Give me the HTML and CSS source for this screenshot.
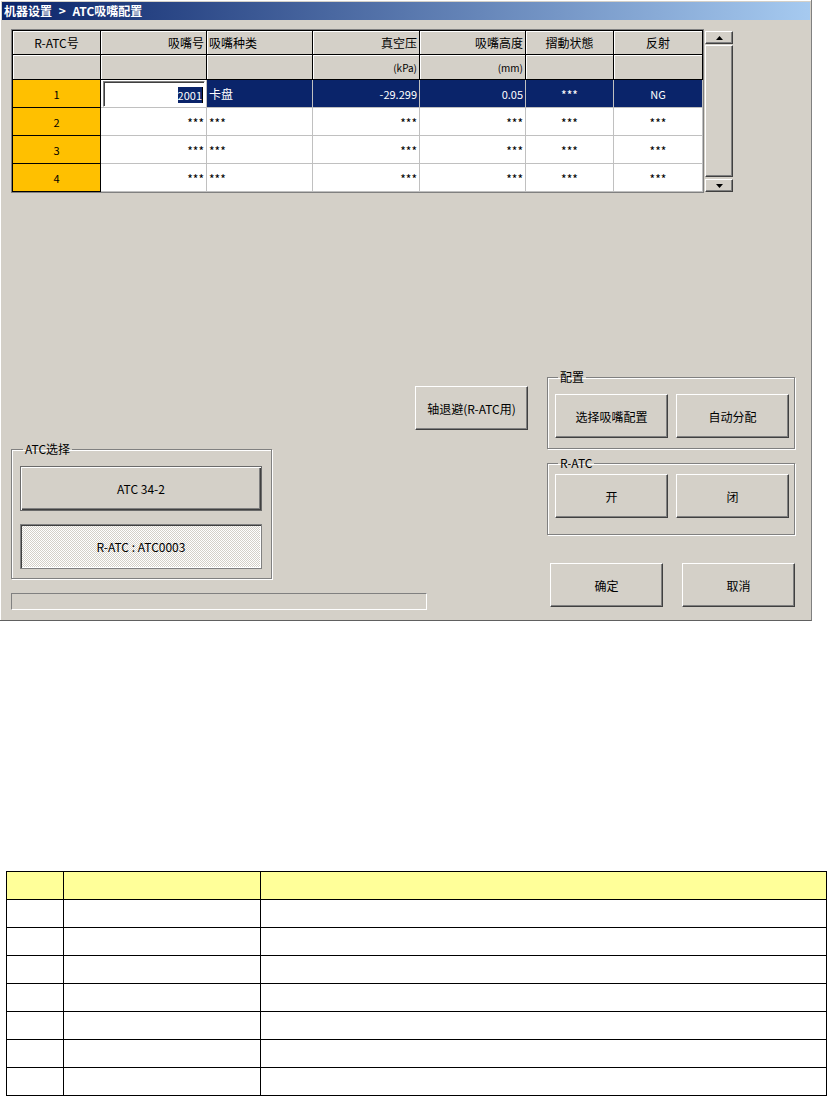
FILE: index.html
```html
<!DOCTYPE html>
<html lang="zh-CN">
<head>
    <meta charset="UTF-8">
    <title>ATC吸嘴配置</title>
    <link rel="stylesheet" href="styles.css">
</head>
<body>

    <div class="window">
        <div class="titlebar">机器设置 &gt; ATC吸嘴配置</div>

        <!-- nozzle grid + scrollbar -->
        <div class="grid-area">
            <table class="grid">
                <colgroup>
                    <col style="width: 88px">
                    <col style="width: 106px">
                    <col style="width: 106px">
                    <col style="width: 107px">
                    <col style="width: 106px">
                    <col style="width: 88px">
                    <col style="width: 89px">
                </colgroup>
                <tr class="head">
                    <td class="c">R-ATC号</td>
                    <td class="r">吸嘴号</td>
                    <td>吸嘴种类</td>
                    <td class="r">真空压</td>
                    <td class="r">吸嘴高度</td>
                    <td class="c">摺動状態</td>
                    <td class="c">反射</td>
                </tr>
                <tr class="head units">
                    <td></td>
                    <td></td>
                    <td></td>
                    <td class="r">(kPa)</td>
                    <td class="r">(mm)</td>
                    <td></td>
                    <td></td>
                </tr>
                <tr class="sel">
                    <td class="key">1</td>
                    <td class="edit"><div class="edit-box"><span class="picked">2001</span></div></td>
                    <td class="big">卡盘</td>
                    <td class="r">-29.299</td>
                    <td class="r">0.05</td>
                    <td class="c"><span class="s">***</span></td>
                    <td class="c">NG</td>
                </tr>
                <tr>
                    <td class="key">2</td>
                    <td class="r"><span class="s">***</span></td>
                    <td><span class="s">***</span></td>
                    <td class="r"><span class="s">***</span></td>
                    <td class="r"><span class="s">***</span></td>
                    <td class="c"><span class="s">***</span></td>
                    <td class="c"><span class="s">***</span></td>
                </tr>
                <tr>
                    <td class="key">3</td>
                    <td class="r"><span class="s">***</span></td>
                    <td><span class="s">***</span></td>
                    <td class="r"><span class="s">***</span></td>
                    <td class="r"><span class="s">***</span></td>
                    <td class="c"><span class="s">***</span></td>
                    <td class="c"><span class="s">***</span></td>
                </tr>
                <tr>
                    <td class="key">4</td>
                    <td class="r"><span class="s">***</span></td>
                    <td><span class="s">***</span></td>
                    <td class="r"><span class="s">***</span></td>
                    <td class="r"><span class="s">***</span></td>
                    <td class="c"><span class="s">***</span></td>
                    <td class="c"><span class="s">***</span></td>
                </tr>
            </table>

            <div class="vscroll">
                <div class="sb-btn">
                    <svg width="7" height="4" viewBox="0 0 7 4"><polygon points="3.5,0 7,4 0,4" fill="#000"/></svg>
                </div>
                <div class="sb-thumb"></div>
                <div class="sb-btn">
                    <svg width="7" height="4" viewBox="0 0 7 4"><polygon points="0,0 7,0 3.5,4" fill="#000"/></svg>
                </div>
            </div>
        </div>

        <div class="lower">
            <div class="left-col">
                <button class="btn btn-evade">轴退避(R-ATC用)</button>

                <fieldset class="group group-atc">
                    <legend>ATC选择</legend>
                    <button class="btn btn-wide btn-default">ATC 34-2</button>
                    <button class="btn btn-wide btn-checked">R-ATC : ATC0003</button>
                </fieldset>

                <div class="status"></div>
            </div>

            <div class="right-col">
                <fieldset class="group group-cfg">
                    <legend>配置</legend>
                    <div class="btn-row">
                        <button class="btn">选择吸嘴配置</button>
                        <button class="btn">自动分配</button>
                    </div>
                </fieldset>

                <fieldset class="group group-ratc">
                    <legend>R-ATC</legend>
                    <div class="btn-row">
                        <button class="btn">开</button>
                        <button class="btn">闭</button>
                    </div>
                </fieldset>

                <div class="btn-row dialog-row">
                    <button class="btn">确定</button>
                    <button class="btn">取消</button>
                </div>
            </div>
        </div>
    </div>

    <!-- empty notes table under the screenshot -->
    <table class="doc">
        <colgroup>
            <col style="width: 57px">
            <col style="width: 197px">
            <col>
        </colgroup>
        <tr class="doc-head"><td></td><td></td><td></td></tr>
        <tr><td></td><td></td><td></td></tr>
        <tr><td></td><td></td><td></td></tr>
        <tr><td></td><td></td><td></td></tr>
        <tr><td></td><td></td><td></td></tr>
        <tr><td></td><td></td><td></td></tr>
        <tr><td></td><td></td><td></td></tr>
        <tr><td></td><td></td><td></td></tr>
    </table>

</body>
</html>
```

FILE: styles.css
```css
body {
    margin: 0;
    background: #fff;
    font-family: "Noto Sans CJK SC", sans-serif;
    font-size: 12px;
    color: #000;
}

.window {
    width: 812px;
    height: 621px;
    box-sizing: border-box;
    background: #d4d0c8;
    border-right: 1px solid #808080;
    border-bottom: 1px solid #606060;
    padding: 2px 1px 0 2px;
    box-shadow: inset 1px 1px 0 #fff;
}

.titlebar {
    height: 18px;
    line-height: 18px;
    padding-left: 2px;
    background: linear-gradient(to right, #0a246a, #a6caf0);
    color: #fff;
    font-weight: bold;
    font-size: 12px;
    word-spacing: 4px;
}

/* grid */
.grid-area {
    display: flex;
    gap: 2px;
    margin-top: 10px;
    padding-left: 10px;
}

.grid {
    border-collapse: collapse;
    table-layout: fixed;
    width: 691px;
    border: 1px solid #000;
    outline: 1px solid #808080;
}

.grid td {
    height: 28px;
    padding: 0 2px;
    background: #fff;
    border: 1px solid #c0c0c0;
    font-size: 11px;
    white-space: nowrap;
    overflow: hidden;
    box-sizing: border-box;
}

.grid .s {
    font-size: 12px;
    vertical-align: -3px;
}

.grid .head td {
    height: 24px;
    background: #d4d0c8;
    border: 1px solid #000;
    font-size: 12px;
    box-shadow: inset 1px 1px 0 #fff;
}

.grid .units td {
    height: 25px;
    font-size: 10px;
}

.grid .c { text-align: center; }
.grid .r { text-align: right; }

.grid td.key {
    background: #ffc000;
    border-color: #000;
    text-align: center;
}

.grid .sel td {
    background: #0a246a;
    color: #fff;
}

.grid .sel td.key {
    background: #ffc000;
    color: #000;
}

.grid .sel td.big {
    font-size: 12px;
}

.grid .sel td.edit {
    background: #fff;
    padding: 0 1px 0 2px;
}

.edit-box {
    height: 26px;
    line-height: 26px;
    text-align: right;
    box-sizing: border-box;
    border: 1px solid;
    border-color: #808080 #fff #fff #808080;
    box-shadow: inset 1px 1px 0 #404040;
    padding-right: 1px;
}

.picked {
    background: #0a246a;
    color: #fff;
    border-right: 1px solid #000;
}

.vscroll {
    width: 28px;
    display: flex;
    flex-direction: column;
    gap: 1px;
    padding-top: 1px;
}

.sb-btn,
.sb-thumb {
    box-sizing: border-box;
    background: #d4d0c8;
    border: 1px solid;
    border-color: #fff #404040 #404040 #fff;
    box-shadow: inset -1px -1px 0 #808080;
}

.sb-btn {
    height: 13px;
    display: flex;
    align-items: center;
    justify-content: center;
}

.sb-thumb {
    flex: 1;
    margin-bottom: 1px;
}

/* lower area */
.lower {
    display: flex;
    padding-left: 9px;
}

.left-col {
    width: 517px;
    display: flex;
    flex-direction: column;
    align-items: flex-start;
}

.right-col {
    width: 248px;
    margin-left: 19px;
    display: flex;
    flex-direction: column;
}

.btn {
    width: 113px;
    height: 44px;
    box-sizing: border-box;
    background: #d4d0c8;
    border: 1px solid;
    border-color: #fff #404040 #404040 #fff;
    box-shadow: inset -1px -1px 0 #808080;
    font-family: "Noto Sans CJK SC", sans-serif;
    font-size: 12px;
    color: #000;
    padding: 0;
}

.btn-evade {
    align-self: flex-end;
    margin-top: 194px;
}

.btn-row {
    display: flex;
    gap: 8px;
}

.group {
    margin: 0;
    border: 1px solid #808080;
    box-shadow: 1px 1px 0 #fff, inset 1px 1px 0 #fff;
}

.group legend {
    padding: 0 2px;
    margin-left: 3px;
    line-height: 14px;
    font-size: 12px;
}

.group-cfg {
    margin-top: 178px;
    padding: 10px 5px 10px 7px;
}

.group-ratc {
    margin-top: 7px;
    padding: 4px 5px 16px 7px;
}

.dialog-row {
    margin-top: 28px;
    padding-left: 3px;
    gap: 19px;
}

.group-atc {
    width: 261px;
    box-sizing: border-box;
    margin-top: 12px;
    padding: 10px 9px 9px 8px;
    display: flex;
    flex-direction: column;
    gap: 13px;
}

.btn-wide {
    width: 242px;
    height: 45px;
}

.btn-default {
    border: 1px solid #6a6a6a;
    box-shadow: inset 1px 1px 0 #fff, inset -1px -1px 0 #404040, inset -2px -2px 0 #808080;
}

.btn-checked {
    border: 1px solid #808080;
    box-shadow: inset 1px 1px 0 #404040, inset -1px -1px 0 #fff;
    background: repeating-conic-gradient(#fff 0 25%, #d4d0c8 0 50%) 0 0 / 2px 2px;
}

.status {
    width: 416px;
    height: 17px;
    box-sizing: border-box;
    margin-top: 14px;
    border: 1px solid;
    border-color: #808080 #fff #fff #808080;
}

/* notes table */
.doc {
    margin: 250px 0 0 6px;
    width: 821px;
    border-collapse: collapse;
    table-layout: fixed;
}

.doc td {
    height: 27px;
    border: 1px solid #000;
    padding: 0;
}

.doc .doc-head td {
    background: #ffff99;
}
```
